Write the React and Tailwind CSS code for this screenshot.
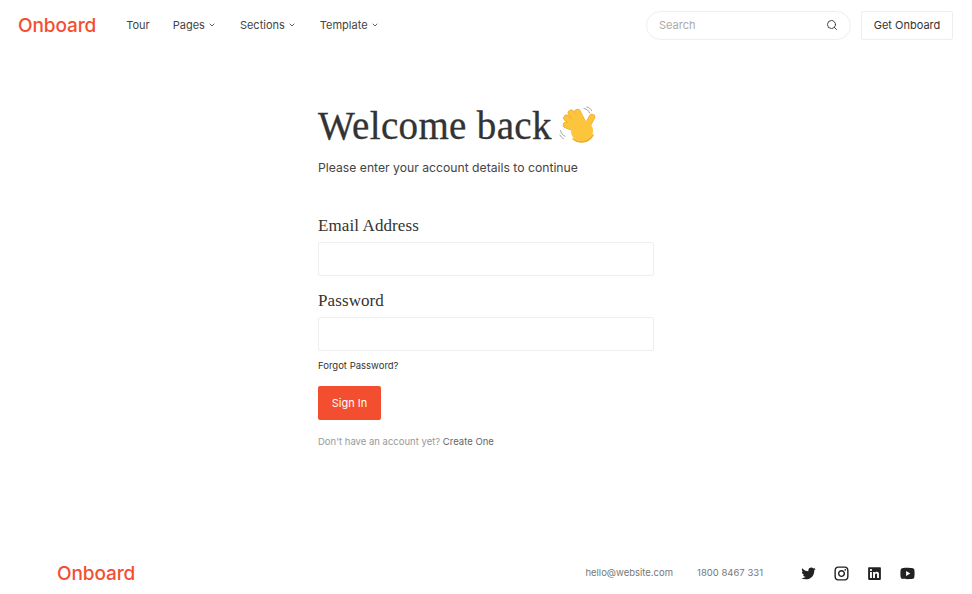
import { ChevronDown, Search } from 'lucide-react';
import { RiTwitterFill, RiInstagramLine, RiLinkedinBoxFill, RiYoutubeFill } from 'react-icons/ri';

function Logo() {
  return (
    <span className="font-['Inter',sans-serif] text-[19px] leading-none font-medium text-[#f44e30] tracking-[-0.1px]">
      Onboard
    </span>
  );
}

function NavItem({ label, menu, className }) {
  return (
    <a className={`flex items-center gap-[3px] text-[11px] leading-none text-[#444444] ${className}`}>
      {label}
      {menu && <ChevronDown size={8} strokeWidth={2.5} />}
    </a>
  );
}

function WaveHand() {
  const fingers = [
    'M20 24 L7 19',
    'M20 22 L7.500 12',
    'M22 20 L12 7',
    'M25 19 L18.500 6',
    'M26 24 L33 11',
  ];
  return (
    <svg width="38" height="38" viewBox="0 0 38 38" fill="none">
      {fingers.map((d) => (
        <path key={d} d={d} stroke="#e9a21f" strokeWidth="6.400" strokeLinecap="round" />
      ))}
      {fingers.map((d) => (
        <path key={d} d={d} stroke="#fcc53c" strokeWidth="5.400" strokeLinecap="round" />
      ))}
      <circle cx="23" cy="25" r="11" fill="#fcc53c" />
      <path d="M14 33 C20 38 30 37 34 29" stroke="#eea722" strokeWidth="1.500" strokeLinecap="round" />
      <path d="M25 2.500c2.800.4 4.800 2 5.600 4.500M28 1c2.400.5 3.800 1.800 4.600 3.800" stroke="#9a9a9a" strokeWidth="0.900" strokeLinecap="round" />
      <path d="M1.500 24.500c.5 2.800 2 4.700 4.500 5.700M1 29c.8 1.800 1.800 2.900 3.500 3.700" stroke="#9a9a9a" strokeWidth="0.900" strokeLinecap="round" />
    </svg>
  );
}

function Field({ label, className }) {
  return (
    <div className={className}>
      <label className="block font-['Liberation_Serif',serif] text-[17px] leading-none text-[#333333] tracking-[0.1px]">
        {label}
      </label>
      <input className="mt-[8px] block w-full h-[34px] border border-[#eeeeee] rounded-[2px] bg-white outline-none" />
    </div>
  );
}

export default function App() {
  return (
    <div className="w-[972px] h-[594px] overflow-hidden flex flex-col bg-white font-['Inter',sans-serif] text-[#333333]">
      {/* Header */}
      <header className="flex items-center justify-between h-[48px] mt-[1px] pl-[18px] pr-[19px]">
        <div className="flex items-center">
          <Logo />
          <nav className="flex items-center ml-[30px]">
            <NavItem label="Tour" />
            <NavItem label="Pages" menu className="ml-[23px]" />
            <NavItem label="Sections" menu className="ml-[24px]" />
            <NavItem label="Template" menu className="ml-[24px]" />
          </nav>
        </div>
        <div className="flex items-center gap-[10px]">
          <div className="flex items-center justify-between w-[205px] h-[29px] pl-[12px] pr-[12px] border border-[#eeeeee] rounded-full">
            <span className="text-[11px] leading-none text-[#aaaaaa]">Search</span>
            <Search size={12} strokeWidth={1.8} className="text-[#333333]" />
          </div>
          <button className="w-[92px] h-[29px] border border-[#eeeeee] rounded-[2px] text-[11px] text-[#333333]">
            Get Onboard
          </button>
        </div>
      </header>

      {/* Sign in form */}
      <main className="flex-1 w-[336px] ml-[318px] pt-[50px]">
        <div className="flex items-center h-[52px]">
          <h1 className="font-['Liberation_Serif',serif] text-[39px] leading-none text-[#333333] tracking-[0.35px] [-webkit-text-stroke:0.3px_#333333]">
            Welcome back
          </h1>
          <span className="ml-[7px]">
            <WaveHand />
          </span>
        </div>
        <p className="mt-[9px] text-[12.200px] leading-[16px] text-[#444444]">Please enter your account details to continue</p>
        <Field label="Email Address" className="mt-[41px]" />
        <Field label="Password" className="mt-[16px]" />
        <a className="block mt-[9px] text-[9.500px] leading-[12px] text-[#333333]">Forgot Password?</a>
        <button className="block mt-[14px] w-[63px] h-[34px] rounded-[2px] bg-[#f44e30] text-[11px] text-white">Sign In</button>
        <p className="mt-[16px] text-[9.500px] leading-[12px] text-[#999999]">
          Don't have an account yet? <a className="text-[#666666]">Create One</a>
        </p>
      </main>

      {/* Footer */}
      <footer className="flex items-center justify-between h-[42px] pl-[57px] pr-[56px]">
        <Logo />
        <div className="flex items-center">
          <span className="text-[9.500px] text-[#777777]">hello@website.com</span>
          <span className="ml-[24px] text-[9.500px] text-[#777777]">1800 8467 331</span>
          <div className="flex items-center gap-[16px] ml-[37px] text-[#222222]">
            <RiTwitterFill size={17} />
            <RiInstagramLine size={17} />
            <RiLinkedinBoxFill size={17} />
            <RiYoutubeFill size={17} />
          </div>
        </div>
      </footer>
    </div>
  );
}
